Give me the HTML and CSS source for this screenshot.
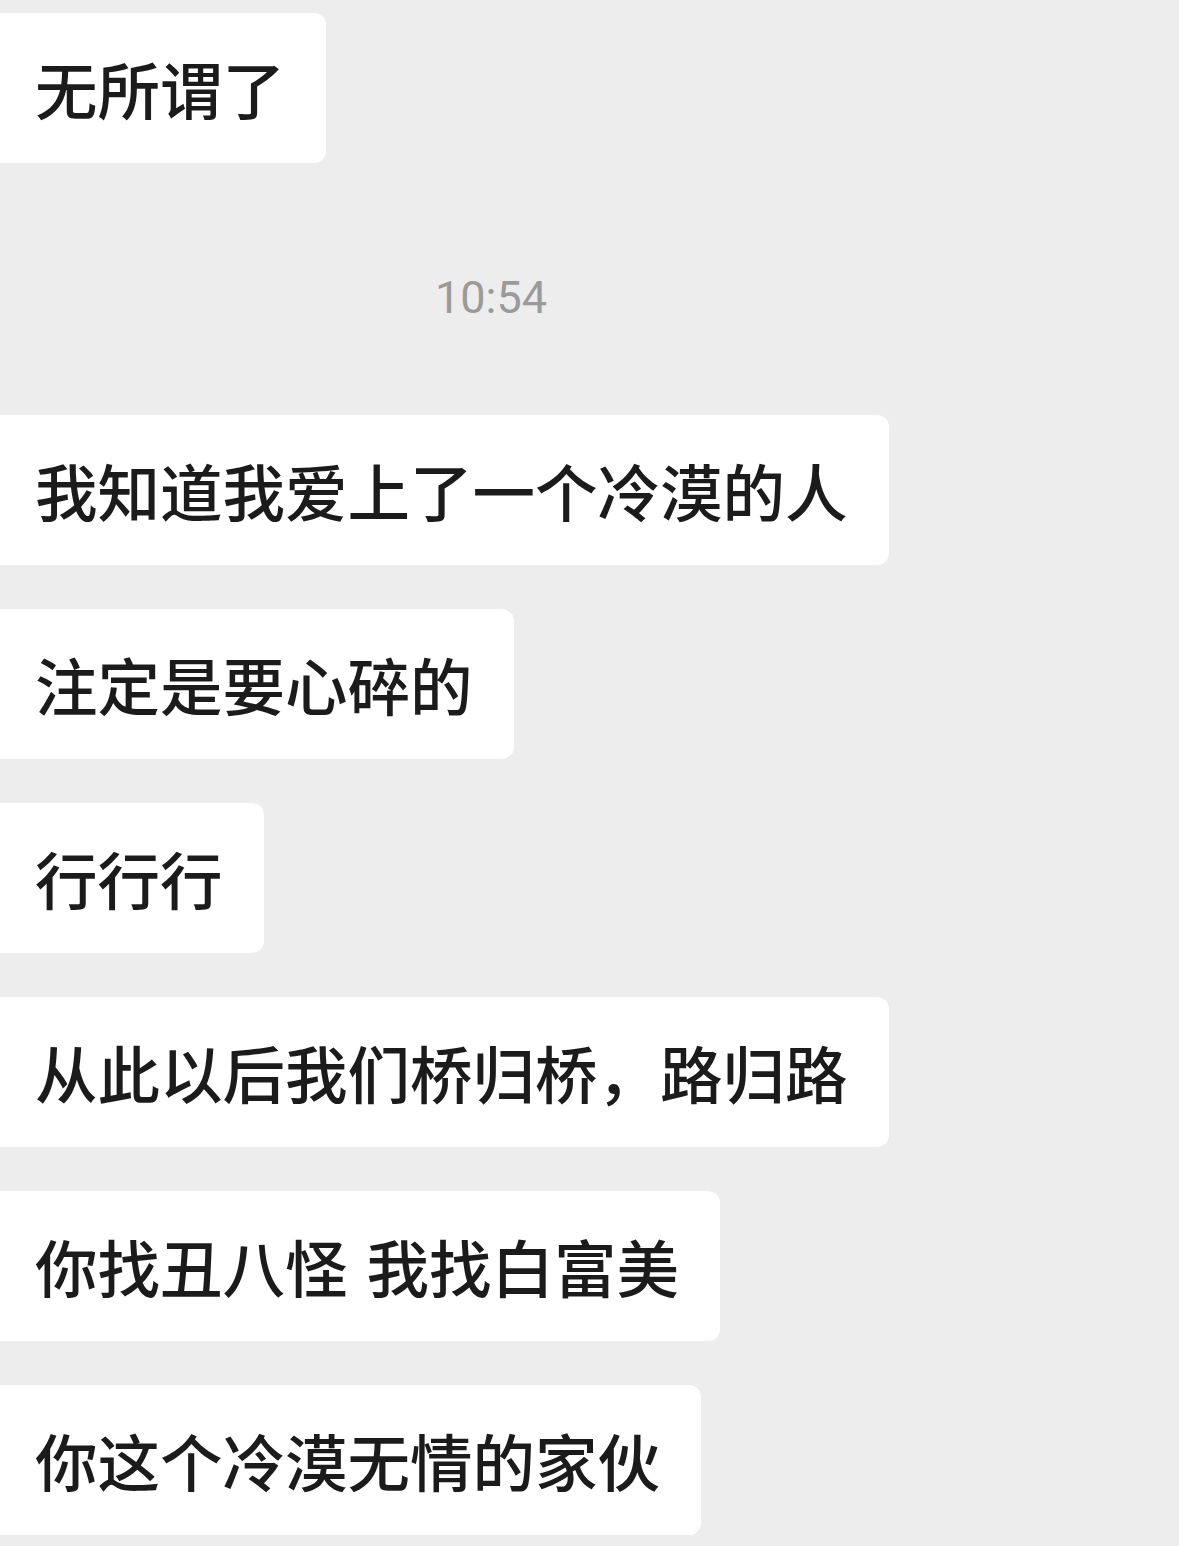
FILE: index.html
```html
<!DOCTYPE html>
<html lang="zh-CN">
<head>
  <meta charset="UTF-8">
  <meta name="viewport" content="width=device-width, initial-scale=1.0">
  <title>聊天记录</title>
  <link rel="stylesheet" href="styles.css">
</head>
<body>
  <div class="chat">
    <div class="bubble">无所谓了</div>

    <div class="time">10:54</div>

    <div class="bubble">我知道我爱上了一个冷漠的人</div>
    <div class="bubble">注定是要心碎的</div>
    <div class="bubble">行行行</div>
    <div class="bubble">从此以后我们桥归桥，路归路</div>
    <div class="bubble">你找丑八怪 我找白富美</div>
    <div class="bubble">你这个冷漠无情的家伙</div>
  </div>
</body>
</html>
```

FILE: styles.css
```css
body {
  margin: 0;
  background-color: #ededed;
  color: #1b1b1b;
  font-family: "Noto Sans CJK SC", "Noto Sans", sans-serif;
  overflow: hidden;
}

.chat {
  display: flex;
  flex-direction: column;
  align-items: flex-start;
  gap: 44px;
  padding-top: 13px;
}

.bubble {
  background-color: #ffffff;
  border-radius: 12px;
  margin-left: -12px;
  padding: 0 41px 0 47px;
  height: 150px;
  line-height: 150px;
  font-size: 62.5px;
  font-weight: 500;
  word-spacing: 0.08em;
  white-space: nowrap;
}

.time {
  align-self: stretch;
  text-align: center;
  padding: 18px 197px 0 0;
  height: 146px;
  line-height: 146px;
  font-family: Roboto, "Noto Sans", sans-serif;
  font-size: 45px;
  color: #9a9a9a;
}
```
